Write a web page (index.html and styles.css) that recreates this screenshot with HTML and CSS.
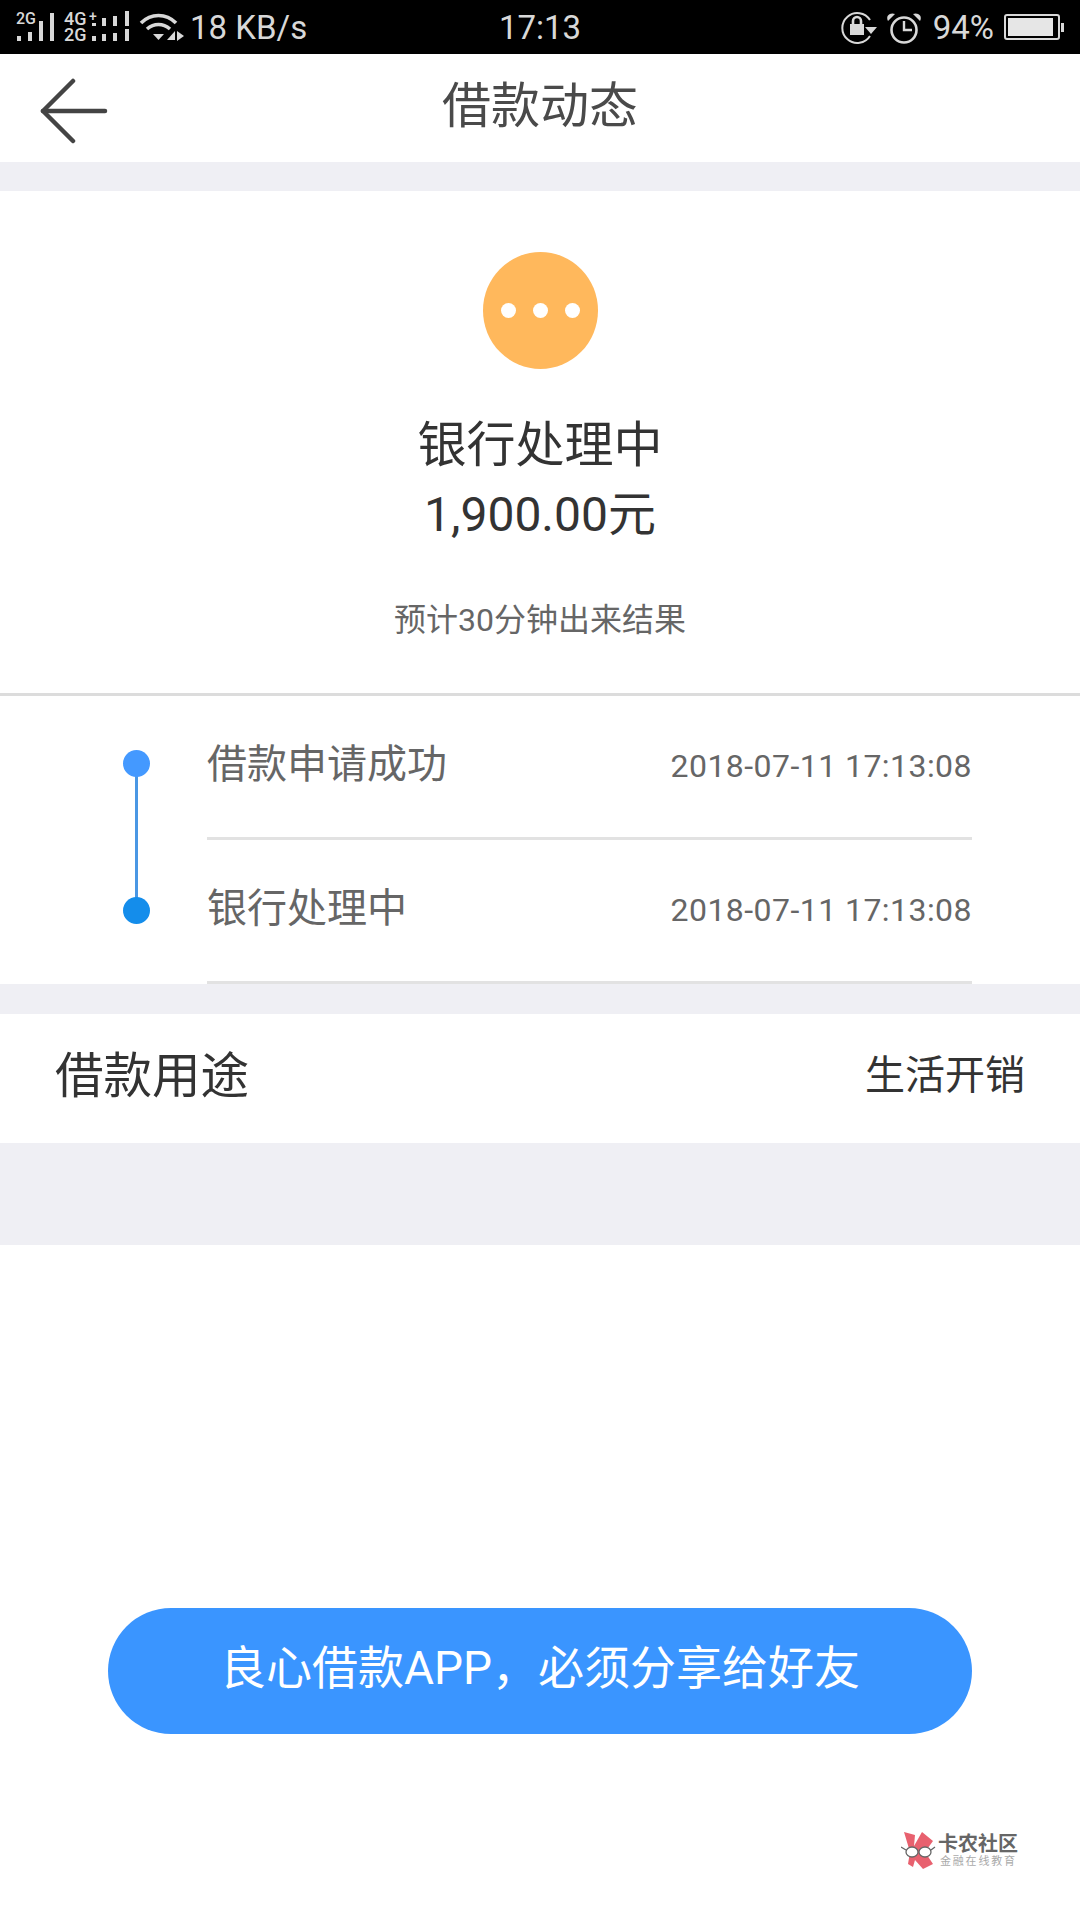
FILE: index.html
```html
<!DOCTYPE html>
<html lang="zh-CN">
<head>
    <meta charset="UTF-8">
    <meta name="viewport" content="width=device-width, initial-scale=1.0">
    <title>借款动态</title>
    <link rel="stylesheet" href="styles.css">
</head>
<body>

<div id="principal">
    <div class="status-bar">
        <div class="status-left">
            <svg class="status-icons" width="188" height="54" viewBox="0 0 188 54">
                <g fill="#d8d8d8">
                    <text class="sim-label" x="16" y="24">2G</text>
                    <rect x="17" y="36" width="4" height="5"/>
                    <rect x="28" y="32" width="4" height="9"/>
                    <rect x="39" y="21" width="4" height="20"/>
                    <rect x="50" y="13" width="4" height="28"/>

                    <text class="sim-label sim-large" x="64" y="25">4G</text>
                    <text class="sim-plus" x="89" y="21">+</text>
                    <text class="sim-label sim-large" x="64" y="41">2G</text>
                    <rect x="92" y="23" width="4" height="3"/>
                    <rect x="92" y="36" width="4" height="5"/>
                    <rect x="102" y="18" width="4" height="8"/>
                    <rect x="113" y="16" width="4" height="10"/>
                    <rect x="125" y="11" width="4" height="15"/>
                    <rect x="102" y="34" width="4" height="7"/>
                    <rect x="113" y="33" width="4" height="8"/>
                    <rect x="125" y="29" width="4" height="12"/>

                    <path d="M153 34H164L158.500 40Z"/>
                    <path d="M175 31V40H167Z"/>
                    <path d="M177 31V41L184 36Z"/>
                </g>
                <g fill="none" stroke="#d8d8d8" stroke-width="3.600">
                    <path d="M141 23C151 13 166 13 176 23"/>
                    <path d="M147 29C154 23 163 23 170 29"/>
                </g>
            </svg>
            <span class="status-text">18 KB/s</span>
        </div>
        <span class="status-text">17:13</span>
        <div class="status-right">
            <svg class="status-icons" width="84" height="54" viewBox="840 0 84 54" fill="none" stroke="#d8d8d8">
                <path d="M871 36A15 15 0 1 1 871 20" stroke-width="2"/>
                <path d="M866 27H878L872 34Z" fill="#d8d8d8" stroke="none"/>
                <rect x="851" y="24" width="14" height="11" fill="#d8d8d8" stroke="none"/>
                <path d="M854 24V21A4 4 0 0 1 862 21V24" stroke-width="2.600"/>
                <circle cx="905" cy="30" r="12.500" stroke-width="2.600"/>
                <path d="M905 21V30H913" stroke-width="2.400"/>
                <path d="M889 21L896 14C892 12 886 15 889 21Z" fill="#d8d8d8" stroke="none"/>
                <path d="M921 21L914 14C918 12 924 15 921 21Z" fill="#d8d8d8" stroke="none"/>
            </svg>
            <span class="status-text">94%</span>
            <div class="battery">
                <div class="battery-body"><div class="battery-level"></div></div>
                <div class="battery-tip"></div>
            </div>
        </div>
    </div>

    <div class="nav-bar">
        <svg class="nav-back" width="68" height="66" viewBox="0 0 68 66" fill="none" stroke="#444" stroke-width="4.500" stroke-linecap="round" stroke-linejoin="round">
            <path d="M33 3L3 33L33 63"/>
            <path d="M3 33H65"/>
        </svg>
        <h1 class="nav-title">借款动态</h1>
    </div>

    <div class="gap gap-top"></div>

    <div class="resumo">
        <div class="status-icon">
            <span class="status-dot"></span>
            <span class="status-dot"></span>
            <span class="status-dot"></span>
        </div>
        <div class="resumo-titulo">银行处理中</div>
        <div class="resumo-valor">1,900.00元</div>
        <div class="resumo-nota">预计30分钟出来结果</div>
    </div>

    <div class="timeline">
        <div class="timeline-line"></div>
        <div class="timeline-row">
            <span class="timeline-dot dot-claro"></span>
            <div class="timeline-content">
                <span class="timeline-nome">借款申请成功</span>
                <span class="timeline-data">2018-07-11 17:13:08</span>
            </div>
        </div>
        <div class="timeline-row">
            <span class="timeline-dot dot-escuro"></span>
            <div class="timeline-content">
                <span class="timeline-nome">银行处理中</span>
                <span class="timeline-data">2018-07-11 17:13:08</span>
            </div>
        </div>
    </div>

    <div class="gap gap-small"></div>

    <div class="uso">
        <span class="uso-nome">借款用途</span>
        <span class="uso-valor">生活开销</span>
    </div>

    <div class="gap gap-large"></div>

    <div class="rodape">
        <div class="botao">良心借款APP，必须分享给好友</div>
    </div>

    <div class="marca">
        <svg width="35" height="38" viewBox="0 0 35 38">
            <path d="M3 0L14 3L13 14L21 0L32 9L24 20L32 32L22 37L14 28L12 35L7 32L9 20Z" fill="#e8616f"/>
            <ellipse cx="11" cy="20" rx="6" ry="5" fill="#fff" stroke="#666" stroke-width="1.300"/>
            <ellipse cx="24" cy="20" rx="6" ry="5" fill="#fff" stroke="#666" stroke-width="1.300"/>
            <path d="M0 15L5 18M30 18L34 15" stroke="#666" stroke-width="1.300"/>
        </svg>
        <div class="marca-texto">
            <span class="marca-nome">卡农社区</span>
            <span class="marca-sub">金融在线教育</span>
        </div>
    </div>
</div>

</body>
</html>
```

FILE: styles.css
```css
* {
    box-sizing: border-box;
    font-family: "Roboto", "Noto Sans CJK SC", sans-serif;
    font-weight: 400;
}

body {
    margin: 0;
    background-color: #fff;
}

#principal {
    width: 1080px;
    height: 1920px;
    position: relative;
    display: flex;
    flex-direction: column;
    overflow: hidden;
}

/* barra de status */
.status-bar {
    height: 54px;
    background-color: #000;
    display: flex;
    align-items: center;
    justify-content: space-between;
}

.status-left, .status-right {
    width: 400px;
    display: flex;
    align-items: center;
}

.status-left {
    gap: 2px;
}

.status-right {
    justify-content: flex-end;
    gap: 10px;
    padding-right: 16px;
}

.status-icons {
    display: block;
}

.status-text {
    color: #d8d8d8;
    font-size: 33px;
    line-height: 56px;
    height: 54px;
    white-space: nowrap;
}

.sim-label {
    font-size: 16px;
    font-weight: 500;
}

.sim-large {
    font-size: 18px;
}

.sim-plus {
    font-size: 14px;
    font-weight: 500;
}

.battery {
    display: flex;
    align-items: center;
}

.battery-body {
    width: 56px;
    height: 26px;
    border: 2px solid #d8d8d8;
    border-radius: 3px;
    padding: 2px 5px 2px 2px;
}

.battery-level {
    width: 100%;
    height: 100%;
    background-color: #e6e6e6;
}

.battery-tip {
    width: 3px;
    height: 9px;
    margin-left: 1px;
    background-color: #d8d8d8;
}

/* topo */
.nav-bar {
    height: 108px;
    padding-bottom: 2px;
    display: flex;
    align-items: center;
    justify-content: center;
    position: relative;
}

.nav-back {
    position: absolute;
    left: 40px;
    top: 24px;
}

.nav-title {
    margin: 0;
    font-size: 49px;
    line-height: 106px;
    color: #4a4a4a;
}

.gap {
    background-color: #efeff4;
}

.gap-top {
    height: 29px;
}

.gap-small {
    height: 30px;
}

.gap-large {
    height: 102px;
}

/* resumo */
.resumo {
    height: 505px;
    border-bottom: 3px solid #dcdcdc;
    display: flex;
    flex-direction: column;
    align-items: center;
    padding-top: 61px;
}

.status-icon {
    width: 115px;
    height: 117px;
    border-radius: 50%;
    background-color: #ffb85c;
    display: flex;
    align-items: center;
    justify-content: center;
    gap: 17px;
}

.status-dot {
    width: 15px;
    height: 15px;
    border-radius: 50%;
    background-color: #fff;
}

.resumo-titulo {
    margin-top: 42px;
    font-size: 49px;
    line-height: 70px;
    color: #333;
}

.resumo-valor {
    font-size: 48px;
    line-height: 68px;
    color: #333;
}

.resumo-nota {
    margin-top: 46px;
    font-size: 32px;
    line-height: 50px;
    color: #666;
}

/* linha do tempo */
.timeline {
    position: relative;
    height: 288px;
    padding-left: 207px;
    padding-right: 108px;
}

.timeline-line {
    position: absolute;
    left: 135px;
    top: 67px;
    width: 3px;
    height: 147px;
    background-color: #4a97e4;
}

.timeline-row {
    position: relative;
    height: 144px;
}

.timeline-row:first-of-type {
    height: 143px;
}

.timeline-content {
    height: 100%;
    border-bottom: 3px solid #e2e2e2;
    display: flex;
    align-items: center;
    justify-content: space-between;
    padding-bottom: 12px;
}

.timeline-nome {
    font-size: 40px;
    color: #666;
}

.timeline-data {
    margin-top: 10px;
    font-size: 32px;
    letter-spacing: 0.450px;
    color: #666;
}

.timeline-dot {
    position: absolute;
    left: -84px;
    top: 54px;
    width: 27px;
    height: 27px;
    border-radius: 50%;
}

.timeline-row + .timeline-row .timeline-dot {
    top: 57px;
}

.dot-claro {
    background-color: #4499ff;
}

.dot-escuro {
    background-color: #148deb;
}

/* uso */
.uso {
    height: 129px;
    display: flex;
    align-items: center;
    justify-content: space-between;
    padding: 0 55px 14px;
}

.uso-nome {
    font-size: 48.500px;
    color: #333;
}

.uso-valor {
    font-size: 40px;
    color: #333;
}

/* botao */
.rodape {
    flex-grow: 1;
    padding: 363px 108px 0;
}

.botao {
    height: 126px;
    border-radius: 63px;
    background-color: #3a95ff;
    color: #fff;
    font-size: 46px;
    line-height: 120px;
    text-align: center;
}

/* marca d'agua */
.marca {
    position: absolute;
    left: 901px;
    top: 1832px;
    display: flex;
    align-items: center;
    gap: 2px;
}

.marca-texto {
    display: flex;
    flex-direction: column;
}

.marca-nome {
    font-size: 20px;
    line-height: 21px;
    font-weight: 700;
    color: #666;
}

.marca-sub {
    font-size: 11px;
    line-height: 14px;
    letter-spacing: 1.800px;
    padding-left: 2px;
    color: #aaa;
}
```
